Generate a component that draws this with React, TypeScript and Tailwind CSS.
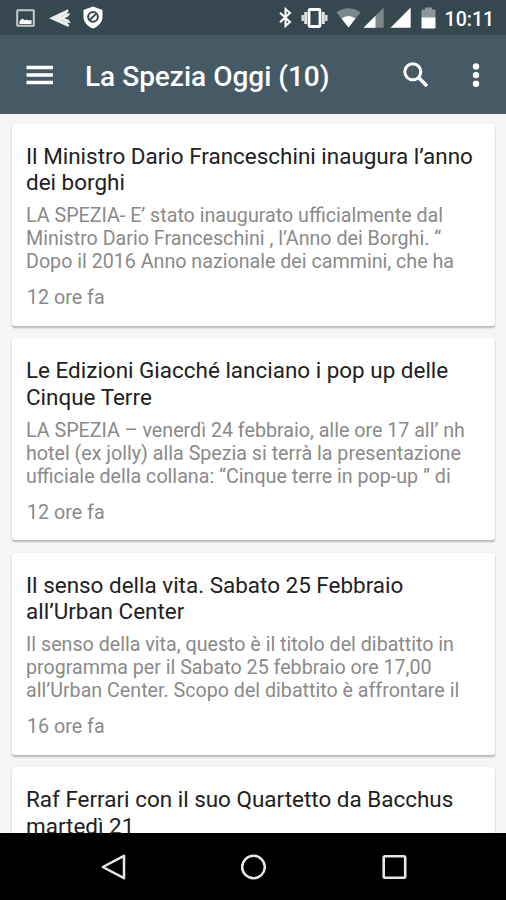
import type { ReactNode } from "react";

interface Article {
  id: number;
  title: string[];
  excerpt: string[];
  time: string;
}

const articles: Article[] = [
  {
    id: 1,
    title: ["Il Ministro Dario Franceschini inaugura l’anno", "dei borghi"],
    excerpt: [
      "LA SPEZIA- E’ stato inaugurato ufficialmente dal",
      "Ministro Dario Franceschini , l’Anno dei Borghi. “",
      "Dopo il 2016 Anno nazionale dei cammini, che ha",
    ],
    time: "12 ore fa",
  },
  {
    id: 2,
    title: ["Le Edizioni Giacché lanciano i pop up delle", "Cinque Terre"],
    excerpt: [
      "LA SPEZIA – venerdì 24 febbraio, alle ore 17 all’ nh",
      "hotel (ex jolly) alla Spezia si terrà la presentazione",
      "ufficiale della collana: “Cinque terre in pop-up ” di",
    ],
    time: "12 ore fa",
  },
  {
    id: 3,
    title: ["Il senso della vita. Sabato 25 Febbraio", "all’Urban Center"],
    excerpt: [
      "Il senso della vita, questo è il titolo del dibattito in",
      "programma per il Sabato 25 febbraio ore 17,00",
      "all’Urban Center. Scopo del dibattito è affrontare il",
    ],
    time: "16 ore fa",
  },
  {
    id: 4,
    title: ["Raf Ferrari con il suo Quartetto da Bacchus", "martedì 21"],
    excerpt: [],
    time: "",
  },
];

function StatusBar() {
  return (
    <div className="flex h-[35px] shrink-0 items-center bg-[#37474f] pl-[16px] text-white">
      {/* notifications */}
      <svg className="h-[18px] w-[19px]" viewBox="0 0 19 18">
        <rect x="1.200" y="1.200" width="16.600" height="15.600" rx="0.5" fill="none" stroke="#c3c9cc" strokeWidth="2" />
        <path d="M3.500 15v-3l3-2.500 2.500 2 1.500-1 2 1 3-.5v4z" fill="#fff" />
      </svg>
      <svg className="ml-[14px] h-[20px] w-[22px]" viewBox="0 0 22 20">
        <path d="M0 10.200 19 1.200l.5 2.200-2 2.400 4-.6-2.500 3.300-3.500 1.700 4 1.600 2.500 3.200-4-.6 2 2.400-.5 2.200z" fill="#eceeef" />
        <path d="m12 8.800 5-2.600M12 11.700l5 2.600" stroke="#b9c0c3" strokeWidth="0.7" />
      </svg>
      <svg className="ml-[12px] h-[23px] w-[20px]" viewBox="0 0 20 23">
        <path d="M10 .5 19.500 4v6.500c0 5.500-4 10-9.500 12C4.500 20.500.5 16 .5 10.500V4z" fill="#fff" />
        <circle cx="10" cy="10.800" r="4.900" fill="none" stroke="#37474f" strokeWidth="2" />
        <path d="m6.700 14 6.600-6.400" stroke="#37474f" strokeWidth="1.800" />
      </svg>

      {/* system */}
      <svg className="ml-[176px] h-[21px] w-[13px]" viewBox="0 0 13 21">
        <path d="M1 5.700 11 15 6.500 19V2L11 6 1 15.300" fill="none" stroke="#fff" strokeWidth="2" />
      </svg>
      <svg className="ml-[9px] h-[20px] w-[27px]" viewBox="0 0 27 20">
        <rect x="8" y="1.500" width="11" height="17" rx="1" fill="none" stroke="#fff" strokeWidth="2.800" />
        <path d="M4.700 4v12M22.300 4v12" stroke="#dfe3e4" strokeWidth="3" />
        <path d="M1.700 7v6M25.300 7v6" stroke="#dfe3e4" strokeWidth="2.400" />
      </svg>
      <svg className="ml-[8px] h-[20px] w-[25px]" viewBox="0 0 25 20">
        <path d="M12.500 19.500.5 4.500Q12.500-3.800 24.500 4.500z" fill="#7c878c" />
        <path d="M12.500 19.500 5.500 10.500q7-5 14 0z" fill="#fff" />
      </svg>
      <svg className="ml-[2px] h-[21px] w-[21px]" viewBox="0 0 21 21">
        <path d="M.5 20.700 20.700.5v20.200z" fill="#7c878c" />
        <path d="M.5 20.700 12.500 8.700v12z" fill="#fff" />
      </svg>
      <svg className="ml-[6px] h-[21px] w-[21px]" viewBox="0 0 21 21">
        <path d="M.5 20.700 20.700.5v20.200z" fill="#fff" />
      </svg>
      <svg className="ml-[10px] h-[22px] w-[15px]" viewBox="0 0 15 22">
        <path d="M4 .5h7v2h2.500q1 0 1 1V11H.5V3.500q0-1 1-1H4z" fill="#8d979b" />
        <path d="M.5 10.500h14V20.500q0 1-1 1h-12q-1 0-1-1z" fill="#fff" />
      </svg>
      <span className="mt-[5px] ml-[8.5px] text-[19.6px] leading-6 font-medium">10:11</span>
    </div>
  );
}

function AppBar() {
  return (
    <div className="flex h-[79px] shrink-0 items-center bg-[#455a64] pl-[26px] text-white">
      <svg className="h-[20px] w-[27px]" viewBox="0 0 27 20">
        <path d="M.5 2.500h26.500M.5 10h26.500M.5 17.500h26.500" stroke="#fff" strokeWidth="3.400" />
      </svg>
      <h1 className="mt-[4px] ml-[32px] w-[312px] text-[28px] leading-8 font-medium whitespace-nowrap">
        La Spezia Oggi (10)
      </h1>
      <svg className="ml-[6px] h-[26px] w-[26px]" viewBox="0 0 26 26">
        <circle cx="9.800" cy="9.800" r="8" fill="none" stroke="#fff" strokeWidth="3" />
        <path d="m15.500 15.500 8.500 8.500" stroke="#fff" strokeWidth="3.600" />
      </svg>
      <svg className="ml-[43px] h-[26px] w-[8px]" viewBox="0 0 8 26">
        <circle cx="4" cy="4.500" r="3.200" fill="#fff" />
        <circle cx="4" cy="13.100" r="3.200" fill="#fff" />
        <circle cx="4" cy="21.700" r="3.200" fill="#fff" />
      </svg>
    </div>
  );
}

function Line({ children }: { children: ReactNode }) {
  return <span className="block whitespace-nowrap">{children}</span>;
}

function ArticleCard({ article }: { article: Article }) {
  return (
    <div className="h-[202.2px] shrink-0 rounded-[3px] bg-white pt-[19px] pl-[14px] shadow-[0_1.5px_2px_rgba(0,0,0,0.25)]">
      <h2 className="text-[22.46px] leading-[26.5px] text-[#212121]">
        {article.title.map((line) => (
          <Line key={line}>{line}</Line>
        ))}
      </h2>
      <p className="mt-[8.5px] text-[19.66px] leading-[23px] text-[#8a8a8a]">
        {article.excerpt.map((line) => (
          <Line key={line}>{line}</Line>
        ))}
      </p>
      <p className="mt-[13px] ml-[1px] text-[19.7px] leading-[23px] text-[#8a8a8a]">{article.time}</p>
    </div>
  );
}

function NavBar() {
  return (
    <div className="flex h-[67px] shrink-0 items-center bg-black pl-[101px]">
      <svg className="h-[26px] w-[25px]" viewBox="0 0 25 26">
        <path d="M1.800 13 23 1.800v22.400z" fill="none" stroke="#e6e6e6" strokeWidth="2.500" strokeLinejoin="round" />
      </svg>
      <svg className="ml-[114px] h-[26px] w-[26px]" viewBox="0 0 26 26">
        <circle cx="13.500" cy="13" r="11.300" fill="none" stroke="#e6e6e6" strokeWidth="2.500" />
      </svg>
      <svg className="ml-[116px] h-[26px] w-[25px]" viewBox="0 0 25 26">
        <rect x="1.700" y="2.200" width="21.500" height="21.500" rx="1.500" fill="none" stroke="#e6e6e6" strokeWidth="2.600" />
      </svg>
    </div>
  );
}

export default function App() {
  return (
    <div className="flex h-[900px] w-[506px] flex-col overflow-hidden bg-[#f5f5f5] font-[Roboto,sans-serif]">
      <StatusBar />
      <AppBar />
      <div className="flex min-h-0 flex-1 flex-col gap-[12.4px] overflow-hidden pt-[9.6px] pr-[11px] pl-[12px]">
        {articles.map((article) => (
          <ArticleCard key={article.id} article={article} />
        ))}
      </div>
      <NavBar />
    </div>
  );
}
